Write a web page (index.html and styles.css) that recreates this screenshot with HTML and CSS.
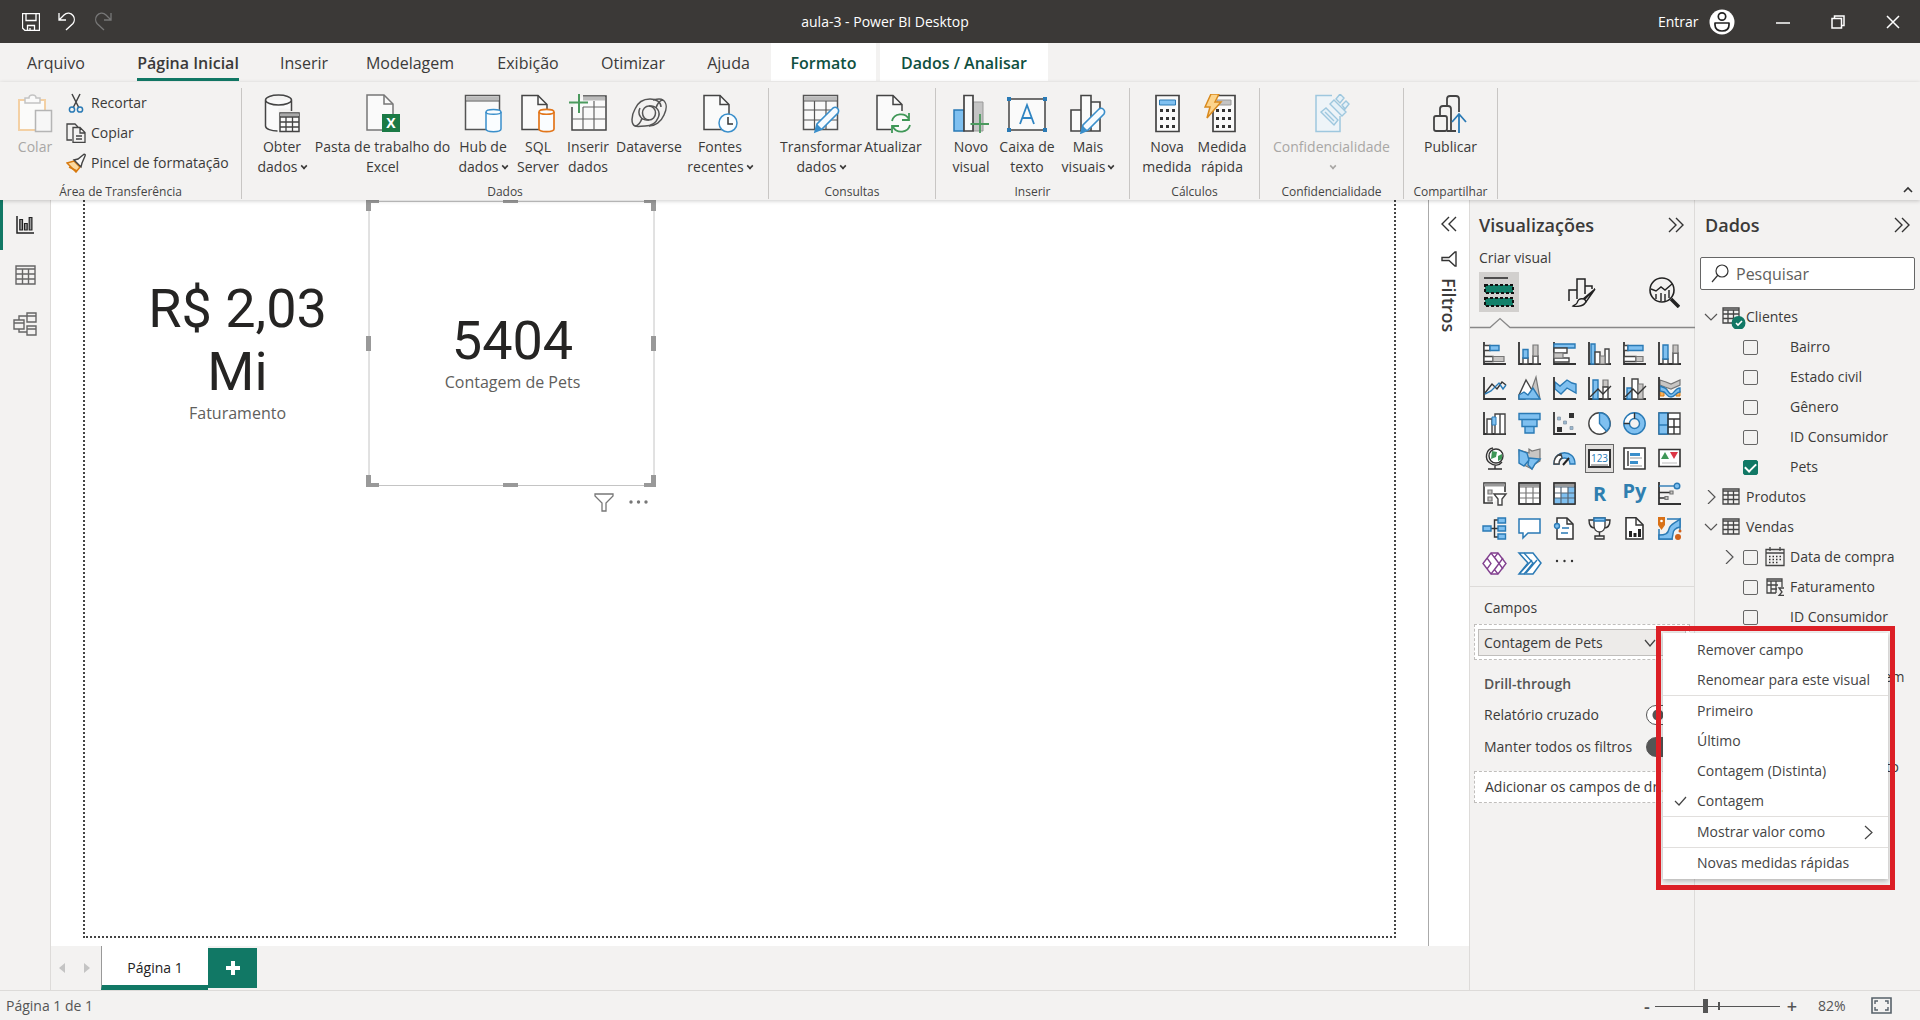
FILE: index.html
```html
<!DOCTYPE html>
<html lang="pt-BR">
<head>
<meta charset="utf-8">
<title>aula-3 - Power BI Desktop</title>
<link rel="stylesheet" href="styles.css">
</head>
<body>
<div class="app">

<header class="titlebar">
  <div class="quick">
    <button class="tb" aria-label="Salvar"><svg width="18" height="18" viewBox="0 0 18 18"><path d="M.5.5h17v17H3L.5 15zM4 .5v7h10v-7M5.500 17.500v-5h7v5M8 15v2.500"/></svg></button>
    <button class="tb" aria-label="Desfazer"><svg width="18" height="19" viewBox="0 0 18 19"><path d="M1 1v7h7M1.500 7.500 6 3c3-3 7-2 9 .5s1.500 6 0 8L8 18"/></svg></button>
    <button class="tb dim" aria-label="Refazer"><svg width="18" height="19" viewBox="0 0 18 19"><path d="M17 1v7h-7M16.500 7.500 12 3C9 0 5 1 3 3.500s-1.500 6 0 8L10 18"/></svg></button>
  </div>
  <div class="apptitle">aula-3 - Power BI Desktop</div>
  <div class="wincontrols">
    <button class="signin">Entrar
      <svg width="26" height="26" viewBox="0 0 26 26"><circle cx="13" cy="13" r="12.500" fill="#fff"/><circle cx="13" cy="7.500" r="3.700" fill="none" stroke="#222" stroke-width="1.700"/><path d="M6 14h14v2c0 4-3 6-7 6s-7-2-7-6z" fill="none" stroke="#222" stroke-width="1.700" stroke-linejoin="round"/></svg>
    </button>
    <button class="tb" aria-label="Minimizar"><svg width="14" height="14" viewBox="0 0 14 14"><path d="M0 8h14" stroke-width="1.500"/></svg></button>
    <button class="tb" aria-label="Restaurar"><svg width="14" height="14" viewBox="0 0 14 14"><path d="M1 3.500h9.500V13H1zM3.500 3V1h9.500v9.500h-2" stroke-width="1.500"/></svg></button>
    <button class="tb" aria-label="Fechar"><svg width="14" height="14" viewBox="0 0 14 14"><path d="M1 1l12 12M13 1 1 13" stroke-width="1.500"/></svg></button>
  </div>
</header>

<nav class="tabs">
  <button>Arquivo</button><button class="on">Página Inicial</button><button>Inserir</button><button>Modelagem</button><button>Exibição</button><button>Otimizar</button><button>Ajuda</button><button class="ctx">Formato</button><button class="ctx">Dados / Analisar</button>
</nav>

<section class="ribbon">
  <div class="group g-clip">
    <div class="tools">
      <button class="rb off"><svg width="36" height="40" viewBox="0 0 36 40"><path d="M2 6h26v30H2z" fill="#fbfbfa" stroke="#f3d0a4" stroke-width="2"/><path d="M8 9V4h4c0-4 7-4 7 0h4v5z" fill="#fafafa" stroke="#c4c4c4" stroke-width="1.500"/><path d="M18.500 16.500h16v21h-16z" fill="#f7f7f7" stroke="#b5b5b5" stroke-width="1.500"/></svg>Colar</button>
      <div class="stack">
        <button><svg width="20" height="20" viewBox="0 0 20 20"><path d="M6 1l7 14M14 1 7 15" fill="none" stroke="#444" stroke-width="1.500"/><circle cx="6" cy="16.500" r="2.600" fill="none" stroke="#2a7ab5" stroke-width="1.500"/><circle cx="14" cy="16.500" r="2.600" fill="none" stroke="#2a7ab5" stroke-width="1.500"/></svg>Recortar</button>
        <button><svg width="20" height="20" viewBox="0 0 20 20"><path d="M6 17H1V1h8l3 3M7 4.500h7l5 5V19.500H7zM14 5v5h5M10 13h6M10 16h6" fill="none" stroke="#444" stroke-width="1.300"/></svg>Copiar</button>
        <button><svg width="20" height="20" viewBox="0 0 20 20"><path d="M1 10l7-2 6 6-4 5z" fill="#fbd9a0" stroke="#d77a10" stroke-width="1.500"/><path d="M3 14l8 4" stroke="#d77a10" stroke-width="1.500"/><path d="M8 7l7 7 1-4 3-7c1-2-1-2-2-1l-5 4z" fill="#fafafa" stroke="#444" stroke-width="1.400"/></svg>Pincel de formatação</button>
      </div>
    </div>
    <h2>Área de Transferência</h2>
  </div>

  <div class="group g-data">
    <div class="tools">
      <button class="rb"><svg width="36" height="40" viewBox="0 0 36 40"><path d="M1.500 6v26c0 3 6 5 13 5V14l13 1V6" fill="#fafafa"/><path d="M27.500 17V6c0-2.800-6-5-13-5s-13 2.200-13 5v26c0 3 6 5 12 5M1.500 6c0 2.800 6 5 13 5s13-2.200 13-5" fill="none" stroke="#444" stroke-width="1.500"/><path d="M16 19h19v18.500H16z" fill="#fafafa" stroke="#444" stroke-width="1.500"/><path d="M16 21h19" stroke="#aaa" stroke-width="3"/><path d="M16 23h19M16 28h19M16 33h19M22 23v15M28.500 23v15" stroke="#444" stroke-width="1.300"/></svg>Obter<br>dados<i></i></button>
      <button class="rb"><svg width="36" height="40" viewBox="0 0 36 40"><path d="M2 1h17l9 9v26H2z" fill="#fafafa" stroke="#777" stroke-width="1.500"/><path d="M19 1v9h9" fill="none" stroke="#777" stroke-width="1.500"/><rect x="17" y="20" width="18" height="18" fill="#1b7a45"/><text x="26" y="34" text-anchor="middle" class="glyph" font-size="14" fill="#fff">X</text></svg>Pasta de trabalho do<br>Excel</button>
      <button class="rb"><svg width="38" height="40" viewBox="0 0 38 40"><path d="M1.500 1.500h34v34h-34z" fill="#fafafa" stroke="#555" stroke-width="1.500"/><path d="M2 4.500h33" stroke="#bbb" stroke-width="4"/><path d="M2 7h33" stroke="#555"/><path d="M22 18v17c0 3.500 15 3.500 15 0V18c0-3.500-15-3.500-15 0z" fill="#fafdff" stroke="#3a8fcb" stroke-width="1.500"/><path d="M22 18c0 3 15 3 15 0" fill="none" stroke="#3a8fcb" stroke-width="1.500"/></svg>Hub de<br>dados<i></i></button>
      <button class="rb"><svg width="36" height="40" viewBox="0 0 36 40"><path d="M2 1.500h16l9 9v25H2z" fill="#fafafa" stroke="#444" stroke-width="1.500"/><path d="M18 1.500v9h9" fill="none" stroke="#444" stroke-width="1.500"/><path d="M19 18v17c0 3.500 15 3.500 15 0V18c0-3.500-15-3.500-15 0z" fill="#fafdff" stroke="#e2761b" stroke-width="1.700"/><path d="M19 18c0 3 15 3 15 0" fill="none" stroke="#e2761b" stroke-width="1.700"/></svg>SQL<br>Server</button>
      <button class="rb"><svg width="38" height="40" viewBox="0 0 38 40"><path d="M3 13v23h34V2H14" fill="#fafafa" stroke="#444" stroke-width="1.500"/><path d="M14 4.500h22" stroke="#bbb" stroke-width="4"/><path d="M14 13v23M25 7v29M14 13h23M3 25h34" stroke="#666" stroke-width="1.200"/><path d="M10 0v19M0 8.500h19" stroke="#4b9a5e" stroke-width="2"/></svg>Inserir<br>dados</button>
      <button class="rb"><svg width="38" height="40" viewBox="0 0 38 40"><g fill="none" stroke="#555" stroke-width="1.500"><ellipse cx="19" cy="19" rx="6.500" ry="7"/><path d="M19 12c8-1 12 6 9 12-2 5-7 8-13 8-4 0-7 1-10 0C1 30 1 22 5 15 8 8 14 5 20 5c6 0 11 3 11 8"/><path d="M19 26c-8 1-12-6-9-12M23 6c4-1 7-2 10 0 4 3 4 9 1 15-3 7-9 11-15 11M12 24c-1 4-4 8-7 8M26 14c1-4 4-8 7-8"/></g></svg>Dataverse</button>
      <button class="rb"><svg width="36" height="40" viewBox="0 0 36 40"><path d="M2 1.500h16l9 9v25H2z" fill="#fafafa" stroke="#444" stroke-width="1.500"/><path d="M18 1.500v9h9" fill="none" stroke="#444" stroke-width="1.500"/><circle cx="26" cy="29" r="9" fill="#fafdff" stroke="#3a8fcb" stroke-width="1.500"/><path d="M26 23v7h5" fill="none" stroke="#333" stroke-width="1.500"/></svg>Fontes<br>recentes<i></i></button>
    </div>
    <h2>Dados</h2>
  </div>

  <div class="group g-query">
    <div class="tools">
      <button class="rb"><svg width="38" height="40" viewBox="0 0 38 40"><path d="M1.500 1.500h34v34h-34z" fill="#fafafa" stroke="#555" stroke-width="1.500"/><path d="M2 4.500h33" stroke="#bbb" stroke-width="4"/><path d="M2 7h33M2 16h33M2 26h33M12.500 7v29M24 7v29" stroke="#555" stroke-width="1.200"/><path d="M13 38l2-8 16-16c3-2 7 1 5 5L20 35z" fill="#f6fbff" stroke="#3a8fcb" stroke-width="1.600"/><path d="M13 38l2-8 5 5z" fill="#3a8fcb"/></svg>Transformar<br>dados<i></i></button>
      <button class="rb"><svg width="36" height="40" viewBox="0 0 36 40"><path d="M2 1.500h16l9 9v25H2z" fill="#fafafa"/><path d="M16 35.500H2v-34h16l9 9V17M18 1.500v9h9" fill="none" stroke="#444" stroke-width="1.500"/><circle cx="25.500" cy="29" r="10" fill="#fafafa"/><path d="M17 27c2-8 13-9 17-2M34 19v7h-7M35 31c-2 8-13 9-17 2M17 39v-7h7" fill="none" stroke="#3f9757" stroke-width="1.800"/></svg>Atualizar</button>
    </div>
    <h2>Consultas</h2>
  </div>

  <div class="group g-insert">
    <div class="tools">
      <button class="rb"><svg width="38" height="40" viewBox="0 0 38 40"><path d="M2 16h10v21H2z" fill="#7fc0f0" stroke="#2a7ab5" stroke-width="1.500"/><path d="M21 8h10v29H21z" fill="#c4c4c4" stroke="#999"/><path d="M12 1.500h9V37h-9z" fill="#fafafa" stroke="#444" stroke-width="1.700"/><path d="M28 20v19M18.500 30H37" stroke="#4b9a5e" stroke-width="1.800"/></svg>Novo<br>visual</button>
      <button class="rb"><svg width="40" height="40" viewBox="0 0 40 40"><path d="M2 5h36v31H2z" fill="#fafafa" stroke="#444" stroke-width="1.500"/><path d="M0 3h4v4H0zM36 3h4v4h-4zM0 34h4v4H0zM36 34h4v4h-4z" fill="#2a7ab5"/><path d="M13 30l7-19 7 19M15.500 24h9" fill="none" stroke="#2f84c2" stroke-width="1.800"/></svg>Caixa de<br>texto</button>
      <button class="rb"><svg width="38" height="40" viewBox="0 0 38 40"><path d="M2 16h10v21H2zM12 1.500h10V37H12zM22 8h9v29h-9z" fill="#fafafa" stroke="#444" stroke-width="1.600"/><path d="M12 39l2-8 16-16c3-2 7 1 5 5L19 36z" fill="#f6fbff" stroke="#3a8fcb" stroke-width="1.600"/><path d="M12 39l2-7 4 4z" fill="#3a8fcb"/></svg>Mais<br>visuais<i></i></button>
    </div>
    <h2>Inserir</h2>
  </div>

  <div class="group g-calc">
    <div class="tools">
      <button class="rb"><svg width="36" height="40" viewBox="0 0 36 40"><path d="M7 1.500h23v36H7z" fill="#fafafa" stroke="#444" stroke-width="1.700"/><path d="M10.500 6h16v5h-16z" fill="#7fc0f0" stroke="#2a7ab5"/><path d="M11 15h3v3h-3zM17 15h3v3h-3zM23 15h3v3h-3zM11 23h3v3h-3zM17 23h3v3h-3zM23 23h3v3h-3zM11 31h3v3h-3zM17 31h3v3h-3zM23 31h3v3h-3z" fill="#333"/></svg>Nova<br>medida</button>
      <button class="rb"><svg width="36" height="40" viewBox="0 0 36 40"><path d="M9 1.500h22v36H9z" fill="#fafafa" stroke="#444" stroke-width="1.700"/><path d="M13 6h14v5H13z" fill="#c4c4c4" stroke="#999"/><path d="M12 15h3v3h-3zM18 15h3v3h-3zM24 15h3v3h-3zM12 23h3v3h-3zM18 23h3v3h-3zM24 23h3v3h-3zM12 31h3v3h-3zM18 31h3v3h-3zM24 31h3v3h-3z" fill="#333"/><path d="M7 0h8l-4 8h6L3 24l3-11H1z" fill="#fcd48c" stroke="#d98a1e" stroke-width="1.500"/></svg>Medida<br>rápida</button>
    </div>
    <h2>Cálculos</h2>
  </div>

  <div class="group g-conf">
    <div class="tools">
      <button class="rb off"><svg width="38" height="40" viewBox="0 0 38 40"><path d="M20 1.500H4v36h24V22" fill="#eef4f8" stroke="#9ec7de" stroke-width="1.500"/><g fill="#e6f1f8" stroke="#9ec7de" stroke-width="1.400"><path d="M9 18l5-4 12 12-4 5zM13 18l9 9"/><path d="M18 10l4-4 12 12-4 4zM24 5l4-5 4 4-4 5zM30 11l4-4 3 3-4 5z"/></g></svg>Confidencialidade<br><i></i></button>
    </div>
    <h2>Confidencialidade</h2>
  </div>

  <div class="group g-share">
    <div class="tools">
      <button class="rb"><svg width="36" height="40" viewBox="0 0 36 40"><path d="M15 12V5q0-3 3-3h6q3 0 3 3v13M8 22v-7q0-3 3-3h5q3 0 3 3v22M4 22h9q2 0 2 2v11q0 2-2 2H4q-2 0-2-2V24q0-2 2-2zM15 37h9" fill="none" stroke="#444" stroke-width="1.800"/><path d="M27 39V21M20 28l7-8 7 8" fill="none" stroke="#2a7ab5" stroke-width="1.800"/></svg>Publicar</button>
    </div>
    <h2>Compartilhar</h2>
  </div>
  <button class="collapse" aria-label="Recolher faixa"><svg width="10" height="7" viewBox="0 0 10 7"><path d="M1 6l4-4 4 4" fill="none" stroke="#333" stroke-width="1.600"/></svg></button>
</section>

<main class="body">
  <aside class="rail">
    <button class="on" aria-label="Relatório"><svg width="18" height="18" viewBox="0 0 18 18"><path d="M1 0v17h17" fill="none" stroke="#222" stroke-width="1.500"/><path d="M3.800 3.500h2.700V14H3.800zM8.500 7.500h2.700V14H8.500zM13.200 1.500h2.700V14h-2.700z" fill="#999" stroke="#222" stroke-width="1.200"/></svg></button>
    <button aria-label="Dados"><svg width="21" height="20" viewBox="0 0 21 20"><path d="M1 1h19v18H1zM1 4h19M1 9h19M1 14h19M7.500 4v15M13.500 4v15" fill="none" stroke="#666" stroke-width="1.400"/></svg></button>
    <button aria-label="Modelo"><svg width="24" height="24" viewBox="0 0 24 24"><path d="M1 8h10v9H1zM14 1h9v9h-9zM14 14h9v9h-9zM1 11h10M14 4h9M14 17h9M6 8V4h8M6 17v3h8" fill="none" stroke="#666" stroke-width="1.400"/></svg></button>
  </aside>

  <div class="center">
    <div class="work">
      <div class="canvas">
        <div class="page">
          <article class="card c1"><strong>R$ 2,03 Mi</strong><span>Faturamento</span></article>
          <article class="card c2"><strong>5404</strong><span>Contagem de Pets</span>
            <svg class="handles" width="291" height="289" viewBox="0 0 291 289"><path d="M3 2.500h285v284H3z" fill="none" stroke="#c4c4c4"/><path d="M0 0h13v4H5v8H0zM137 0h15v4h-15zM278 0h12v12h-5V4h-7zM0 137h5v15H0zM285 137h5v15h-5zM0 276h5v8h8v4H0zM137 284h15v4h-15zM285 276h5v12h-12v-4h7z" fill="#999"/></svg>
            <div class="cardtools"><svg width="20" height="19" viewBox="0 0 20 19"><path d="M1 1h18v2l-7 7v8H8v-8L1 3z" fill="none" stroke="#777" stroke-width="1.300"/></svg><svg width="20" height="19" viewBox="0 0 20 19"><circle cx="2" cy="9" r="1.700" fill="#777"/><circle cx="9.500" cy="9" r="1.700" fill="#777"/><circle cx="17" cy="9" r="1.700" fill="#777"/></svg></div>
          </article>
        </div>
      </div>
      <aside class="filters">
        <button aria-label="Expandir"><svg width="16" height="16" viewBox="0 0 16 16"><path d="M8 1 1 8l7 7M15 1 8 8l7 7" fill="none" stroke="#333" stroke-width="1.400"/></svg></button>
        <svg width="16" height="16" viewBox="0 0 16 16"><path d="M15 1v14h-1L8 9.500H1v-3h7L14 1z" fill="none" stroke="#333" stroke-width="1.400"/></svg>
        <h2>Filtros</h2>
      </aside>
    </div>
    <div class="pages">
      <button class="arrow" aria-label="Anterior"><svg width="6" height="10" viewBox="0 0 6 10"><path d="M6 0v10L0 5z" fill="#c4c4c4"/></svg></button>
      <button class="arrow" aria-label="Próxima"><svg width="6" height="10" viewBox="0 0 6 10"><path d="M0 0v10l6-5z" fill="#c4c4c4"/></svg></button>
      <button class="pagetab">Página 1</button>
      <button class="add" aria-label="Nova página"><svg width="14" height="14" viewBox="0 0 14 14"><path d="M7 0v14M0 7h14" stroke="#fff" stroke-width="4"/></svg></button>
    </div>
  </div>

  <aside class="viz">
    <div class="head"><h2>Visualizações</h2><button aria-label="Recolher"><svg width="16" height="16" viewBox="0 0 16 16"><path d="M1 1l7 7-7 7M8 1l7 7-7 7" fill="none" stroke="#333" stroke-width="1.400"/></svg></button></div>
    <h3>Criar visual</h3>
    <div class="modes">
      <button class="on" aria-label="Compilar visual"><svg width="30" height="31" viewBox="0 0 30 31"><path d="M0 1h24" stroke="#222" stroke-width="1.500"/><path d="M1 8h28v8H1zM1 21h28v8H1z" fill="#12806a" stroke="#111" stroke-width="2" stroke-dasharray="3 2"/></svg></button>
      <button aria-label="Formatar visual"><svg width="28" height="30" viewBox="0 0 28 30"><path d="M1 24V13h8M9 22V2h8v15M17 9h7v3" fill="none" stroke="#222" stroke-width="1.500"/><path d="M27 12 16 23M27 12l-9 13-3-3z" fill="#f3f2f1" stroke="#222" stroke-width="1.400"/><path d="M16 22c-5-1-6 1-7 4-1 2-3 2-4 3 5 1 12 0 13-5z" fill="#f3f2f1" stroke="#222" stroke-width="1.400"/></svg></button>
      <button aria-label="Análise"><svg width="31" height="31" viewBox="0 0 31 31"><circle cx="13" cy="13" r="12" fill="none" stroke="#222" stroke-width="1.600"/><path d="M2 12l5 2 5-4 4 3 7-6M7 17v5M12 16v8M16 17v7M20 13v8" fill="none" stroke="#222" stroke-width="1.400"/><path d="M22 22l8 8" stroke="#222" stroke-width="3.500"/></svg></button>
    </div>
    <svg class="notch" viewBox="0 0 225 12" width="225" height="12"><path d="M0 10.500h20l10-9 10 9h185" fill="none" stroke="#888" stroke-width="1.300"/></svg>
    <div class="gallery">
      <button><svg viewBox="0 0 23 23"><path d="M1 0v22h22" class="k"/><path d="M1 3.500h6v5H1zM1 14.500h9v5H1z" class="w"/><path d="M7 3.500h9v5H7z" class="b"/><path d="M10 14.500h11v5H10z" class="g"/></svg></button>
      <button><svg viewBox="0 0 23 23"><path d="M1 0v22h22" class="k"/><path d="M5 16h5v6H5zM15 14h5v8h-5z" class="w"/><path d="M5 7.500h5V16H5z" class="b"/><path d="M15 3h5v11h-5z" class="g"/></svg></button>
      <button><svg viewBox="0 0 23 23"><path d="M1 0v22h22" class="k"/><path d="M1 2h21v4H1z" class="b"/><path d="M1 6h13v5H1zM1 16h15v4H1z" class="w"/><path d="M1 11h9v5H1z" class="g"/></svg></button>
      <button><svg viewBox="0 0 23 23"><path d="M1 0v22h22" class="k"/><path d="M3 2h4v20H3z" class="b"/><path d="M7 10h5v12H7zM17 7h4v15h-4z" class="w"/><path d="M12 14h5v8h-5z" class="g"/></svg></button>
      <button><svg viewBox="0 0 23 23"><path d="M1 0v22h22" class="k"/><path d="M1 3.500h4v5H1zM1 14.500h12v5H1z" class="w"/><path d="M5 3.500h15v5H5z" class="b"/><path d="M13 14.500h7v5h-7z" class="g"/></svg></button>
      <button><svg viewBox="0 0 23 23"><path d="M1 0v22h22" class="k"/><path d="M5 17h5v5H5zM15 11h5v11h-5z" class="w"/><path d="M5 3h5v14H5z" class="b"/><path d="M15 3h5v8h-5z" class="g"/></svg></button>

      <button><svg viewBox="0 0 23 23"><path d="M1 0v22h22" class="k"/><path d="M2 16l7-9 5 5 5-7 4 3" class="k1"/><path d="M2 17l6-3 8-8 4 6 3-4" class="bl"/></svg></button>
      <button><svg viewBox="0 0 23 23"><path d="M13 14l5-14 4 22h-9z" class="g"/><path d="M1 18 8 3l7 12-8 7H1z" class="w"/><path d="M1 18l5-3 4 3 5-7 7 11H1z" class="b"/></svg></button>
      <button><svg viewBox="0 0 23 23"><path d="M2 5l5 4 7-6 5 3 4 1v9l-9-5-6 6-6-5z" class="b"/><path d="M1 0v22h22" class="k"/></svg></button>
      <button><svg viewBox="0 0 23 23"><path d="M1 0v22h22" class="k"/><path d="M5 3h5v19H5z" class="b"/><path d="M15 3h5v7h-5z" class="g"/><path d="M15 10h5v12h-5z" class="w"/><path d="M2 20l8-8 5 5 8-8" class="k1"/></svg></button>
      <button><svg viewBox="0 0 23 23"><path d="M1 0v22h22" class="k"/><path d="M4 11h5v11H4z" class="b"/><path d="M9 2h6v20H9z" class="w"/><path d="M15 7h5v15h-5z" class="g"/><path d="M2 20l8-8 5 5 8-8" class="k1"/></svg></button>
      <button><svg viewBox="0 0 23 23"><path d="M2 12h4v7H2zM18 14h4v5h-4z" fill="#f7b15c" stroke="#d77a10"/><path d="M2 3l6 2 5 2 9-4v5l-9 4-6-2-5-2z" class="g"/><path d="M2 9l5 2c3 1 3 6 6 6s4-6 9-6v4c-4 0-5 5-9 5s-5-4-7-5l-4-1z" class="b"/><path d="M1 0v22h22" class="k"/></svg></button>

      <button><svg viewBox="0 0 23 23"><path d="M1 0v22h22" class="k"/><path d="M4 7h5v15H4zM12 2h5v20h-5zM17 2h5v20h-5z" class="w"/><path d="M9 5h4v8H9z" fill="#7fc0f0" stroke="#2a7ab5"/></svg></button>
      <button><svg viewBox="0 0 23 23"><path d="M1 1.500h21v6H1zM4 7.500h15v7H4zM7 14.500h9V21H7z" class="b"/></svg></button>
      <button><svg viewBox="0 0 23 23"><path d="M1 0v22h22" class="k"/><path d="M16 1h5v5h-5zM4 15h5v5H4z" fill="#333"/><path d="M4.500 5h3v3h-3zM10.500 9h3v3h-3zM17 14.500h3v3h-3z" fill="#9ab8cf" stroke="#89a" stroke-width=".8"/></svg></button>
      <button><svg viewBox="0 0 23 23"><circle cx="11.500" cy="11.500" r="10.700" class="w"/><path d="M11.500.8a10.700 10.700 0 0 1 7 18.500l-7-7.800z" class="b"/></svg></button>
      <button><svg viewBox="0 0 23 23"><circle cx="11.500" cy="11.500" r="8" fill="none" stroke="#7fc0f0" stroke-width="6"/><path d="M3.500 11.500a8 8 0 0 1 8-8" fill="none" stroke="#fff" stroke-width="5"/><circle cx="11.500" cy="11.500" r="10.700" class="bl"/><circle cx="11.500" cy="11.500" r="5" class="bl"/><path d="M.8 11.500h6M11.500.8v6" class="k1"/></svg></button>
      <button><svg viewBox="0 0 23 23"><path d="M1 1h21v21H1z" class="w"/><path d="M1 1h9v12H1zM1 13h9v9H1z" class="b"/><path d="M10 1v21M10 7h12M16 7v8M10 15h12M16 15v7" class="k1"/></svg></button>

      <button><svg viewBox="0 0 23 23"><circle cx="13" cy="9" r="7" fill="#fff" stroke="#333" stroke-width="1.400"/><path d="M9 4l5 1-1 5-5 2zM15 9l4-2v5l-4 2z" fill="#3f9757"/><path d="M10 1C3 2 1 12 7 16c4 3 9 3 12-1M12 18v4M5 22h14" class="k1"/></svg></button>
      <button><svg viewBox="0 0 23 23"><path d="M1 3l10 3V2l3 2 8-2v12l-5 3-3 5-6-3-6-3z" class="g"/><path d="M1 3l8 3 2 7-5 6-5-3zM11 11l11 1-5 5-3 5-4-4z" class="b"/></svg></button>
      <button><svg viewBox="0 0 23 23"><path d="M1 17C1 2 22 2 22 17h-5c0-8-11-8-11 0z" class="b"/><path d="M1 17c0-6 3-9 7-10l1 4c-2 1-3 3-3 6z" class="w"/><path d="M10 18l6-7" stroke="#222" stroke-width="2"/></svg></button>
      <button class="on"><svg viewBox="0 0 23 23"><path d="M1 3h21v17H1z" fill="#fff" stroke="#333" stroke-width="2"/><path d="M3 18h17" stroke="#999" stroke-width="1.500"/><text x="11.500" y="15" text-anchor="middle" class="num" font-size="10">123</text></svg></button>
      <button><svg viewBox="0 0 23 23"><path d="M1 1h21v21H1z" fill="#fff" stroke="#333" stroke-width="1.600"/><path d="M5 4v15" class="k1"/><path d="M7 6h10v3H7zM7 14h8v3H7z" fill="#3a8fcb"/><path d="M7 11h12M7 19h12" stroke="#999"/></svg></button>
      <button><svg viewBox="0 0 23 23"><path d="M1 2.500h21v17H1z" fill="#fff" stroke="#333" stroke-width="1.600"/><path d="M3 12l4-7 4 7z" fill="#3f9757"/><path d="M12 5h8l-4 7z" fill="#dc3545"/><path d="M4 16h15" stroke="#bbb"/></svg></button>

      <button><svg viewBox="0 0 23 23"><path d="M10 21H1V1h21v9" fill="#fff" stroke="#333" stroke-width="1.600"/><path d="M1 3h21" stroke="#999" stroke-width="3"/><path d="M5 8h4v4H5zM5 15h4v4H5z" class="g"/><path d="M11 12h12l-4 5v6h-4v-6z" class="w"/></svg></button>
      <button><svg viewBox="0 0 23 23"><path d="M1 1h21v21H1z" class="w"/><path d="M1 3h21" stroke="#999" stroke-width="3"/><path d="M1 5h21M1 11h21M1 16h21M8 5v17M15 5v17" stroke="#777" stroke-width="1.200"/><path d="M1 1h21v21H1z" class="k1"/></svg></button>
      <button><svg viewBox="0 0 23 23"><path d="M1 1h21v21H1z" class="w"/><path d="M15 5h7v17H1v-6h7v-5h7z" fill="#7fc0f0"/><path d="M1 3h21" stroke="#999" stroke-width="3"/><path d="M1 5h21M1 11h21M1 16h21M8 5v17M15 5v17" stroke="#567" stroke-width="1.200"/><path d="M1 1h21v21H1z" class="k1"/></svg></button>
      <button><svg viewBox="0 0 23 23"><text x="11.500" y="19" text-anchor="middle" class="letter" font-size="20">R</text></svg></button>
      <button><svg viewBox="0 0 23 23"><text x="11.500" y="16" text-anchor="middle" class="letter" font-size="20">Py</text></svg></button>
      <button><svg viewBox="0 0 23 23"><path d="M1 0v22h22" class="k"/><path d="M1 4h15" class="bl"/><circle cx="19" cy="4" r="2.800" class="b"/><path d="M1 10.500h11M1 16h6" class="k1"/><path d="M12 9h3v3h-3zM7 14.500h3v3H7z" class="g"/></svg></button>

      <button><svg viewBox="0 0 23 23"><path d="M8 11.500h7M15 3h-3.500v17H15" class="k1"/><path d="M0 9h8v5H0zM15 1h7.500v5H15zM15 9h7.500v5H15zM15 17h7.500v5H15z" class="b"/></svg></button>
      <button><svg viewBox="0 0 23 23"><path d="M1 2h21v14H10l-5 5v-5H1z" fill="#fff" stroke="#2a7ab5" stroke-width="1.500"/></svg></button>
      <button><svg viewBox="0 0 23 23"><path d="M4 6V1h10l6 6v15H4V12" fill="#fff" stroke="#333" stroke-width="1.500"/><path d="M14 1v6h6" class="k1"/><circle cx="4" cy="9" r="2.500" class="b"/><path d="M9 11h7M8 16h7" class="bl"/></svg></button>
      <button><svg viewBox="0 0 23 23"><path d="M6 3H1c0 6 2 8 6 8M17 3h5c0 6-2 8-6 8" class="k1"/><path d="M6 1h11v8c0 3-2 6-5.500 6S6 12 6 9z" class="w"/><path d="M6 1h11v3H6z" class="b"/><path d="M11.500 15v4M7 19h9v3H7z" class="k1"/></svg></button>
      <button><svg viewBox="0 0 23 23"><path d="M3 .8h10l7 7V22H3z" fill="#fff" stroke="#333" stroke-width="1.600"/><path d="M13 1v7h7" class="k1"/><path d="M6 14h3v6H6zM10.500 16h3v4h-3zM15 12h3v8h-3z" fill="#222"/></svg></button>
      <button><svg viewBox="0 0 23 23"><path d="M9 2h13v11M1 12v10h14" fill="none" stroke="#2a7ab5" stroke-width="1.500"/><path d="M1 22v-4c6 0 9-1 10-6s5-5 11-10v8c-5 1-7 3-7 7l-1 5z" class="b"/><path d="M0 0h7v8l-3.500 5L0 8z" fill="#d97117"/><circle cx="3.500" cy="4" r="1.300" fill="#fff"/><circle cx="20" cy="20" r="3" fill="#d0611a"/><circle cx="22" cy="14" r="1.500" fill="#d0611a"/></svg></button>

      <button><svg viewBox="0 0 23 23"><path d="M8 1h7l8 10.500L15 22H8L0 11.500z" fill="#fff" stroke="#82408f" stroke-width="1.400"/><path d="M8 1l8 10.500L8 22M15 1l-4 5M15 22l-4-5M4 6l4 5.500L4 17M12 17l8-11M12 6l8 11" fill="none" stroke="#82408f" stroke-width="1.300"/></svg></button>
      <button><svg viewBox="0 0 23 23"><path d="M1 1h14l8 10-8 11H1l9-11z" fill="#fff" stroke="#2a7ab5" stroke-width="1.500"/><path d="M6 1l9 10-9 11M2 21 14 8M8 21 19 8" fill="none" stroke="#2a7ab5" stroke-width="1.400"/></svg></button>
      <button><svg viewBox="0 0 23 23"><circle cx="4" cy="9" r="1.200" fill="#333"/><circle cx="11.500" cy="9" r="1.200" fill="#333"/><circle cx="19" cy="9" r="1.200" fill="#333"/></svg></button>
    </div>
    <div class="wells">
      <h3>Campos</h3>
      <div class="drop"><button class="chip">Contagem de Pets<svg width="12" height="8" viewBox="0 0 12 8"><path d="M1 1l5 6 5-6" fill="none" stroke="#444" stroke-width="1.300"/></svg></button></div>
      <h3 class="bold">Drill-through</h3>
      <label class="toggle">Relatório cruzado<input type="checkbox"></label>
      <label class="toggle">Manter todos os filtros<input type="checkbox" checked></label>
      <div class="drop add-field">Adicionar os campos de dr...</div>
    </div>
    <div class="menu">
      <button>Remover campo</button>
      <button>Renomear para este visual</button>
      <hr>
      <button>Primeiro</button>
      <button>Último</button>
      <button>Contagem (Distinta)</button>
      <button><svg width="13" height="10" viewBox="0 0 13 10"><path d="M1 5l4 4 7-8" fill="none" stroke="#444" stroke-width="1.200"/></svg>Contagem</button>
      <hr>
      <button>Mostrar valor como<svg class="sub" width="9" height="15" viewBox="0 0 9 15"><path d="M1 1l7 6.500L1 14" fill="none" stroke="#444" stroke-width="1.200"/></svg></button>
      <hr>
      <button>Novas medidas rápidas</button>
    </div>
  </aside>

  <aside class="fields">
    <div class="head"><h2>Dados</h2><button aria-label="Recolher"><svg width="16" height="16" viewBox="0 0 16 16"><path d="M1 1l7 7-7 7M8 1l7 7-7 7" fill="none" stroke="#333" stroke-width="1.400"/></svg></button></div>
    <label class="search"><svg width="18" height="19" viewBox="0 0 18 19"><circle cx="11" cy="7" r="6" fill="none" stroke="#333" stroke-width="1.200"/><path d="M7 11l-6 7" stroke="#333" stroke-width="1.200"/></svg><input type="text" placeholder="Pesquisar" aria-label="Pesquisar"></label>
    <div class="tree">
      <button class="tbl"><svg width="14" height="8" viewBox="0 0 14 8"><path d="M1 1l6 6 6-6" class="ch"/></svg><svg width="24" height="24" viewBox="0 0 24 24"><path d="M1 3h16v15H1zM1 5h16M1 9h16M1 13.500h16M6 5v13M11.500 5v13" class="ti"/><circle cx="16.500" cy="18" r="7" fill="#117865"/><path d="M14 18l2 2 4-4" fill="none" stroke="#fff" stroke-width="1.600"/></svg>Clientes</button>
      <label><input type="checkbox"><span></span>Bairro</label>
      <label><input type="checkbox"><span></span>Estado civil</label>
      <label><input type="checkbox"><span></span>Gênero</label>
      <label><input type="checkbox"><span></span>ID Consumidor</label>
      <label><input type="checkbox" checked><span></span>Pets</label>
      <button class="tbl"><svg width="14" height="14" viewBox="0 0 14 14"><path d="M4 0l7 7-7 7" class="ch"/></svg><svg width="24" height="18" viewBox="0 0 24 18"><path d="M1 1h16v15H1zM1 3h16M1 7h16M1 11.500h16M6 3v13M11.500 3v13" class="ti"/></svg>Produtos</button>
      <button class="tbl"><svg width="14" height="8" viewBox="0 0 14 8"><path d="M1 1l6 6 6-6" class="ch"/></svg><svg width="24" height="18" viewBox="0 0 24 18"><path d="M1 1h16v15H1zM1 3h16M1 7h16M1 11.500h16M6 3v13M11.500 3v13" class="ti"/></svg>Vendas</button>
      <label class="exp"><svg width="18" height="14" viewBox="0 0 18 14"><path d="M1 0l7 7-7 7" class="ch"/></svg><input type="checkbox"><span><svg width="20" height="20" viewBox="0 0 20 20"><path d="M1 2.500h18v16H1zM1 6h18M5 0v4M15 0v4" class="ti"/><path d="M4 9.500h13M4 12.500h13M4 15.500h10" stroke="#333" stroke-width="1.500" stroke-dasharray="1.500 2"/></svg></span>Data de compra</label>
      <label><input type="checkbox"><span><svg width="20" height="18" viewBox="0 0 20 18"><path d="M11 15H2V1h15v8M2 3h15M2 7h11M6 3v12M11 3v12M6 11h6" class="ti"/><path d="M19 10h-5l3 4-3 3.500h5" class="ti"/></svg></span>Faturamento</label>
      <label><input type="checkbox"><span></span>ID Consumidor</label>
      <label><input type="checkbox"><span></span>ID Produto</label>
      <label><input type="checkbox"><span></span>Valor embalagem</label>
      <label><input type="checkbox"><span></span>Loja</label>
      <label><input type="checkbox"><span></span>Quantidade</label>
      <label><input type="checkbox"><span></span>Data pagamento</label>
    </div>
  </aside>
</main>

<footer class="status">
  <span>Página 1 de 1</span>
  <div class="zoom"><button aria-label="Reduzir">-</button><input type="range" min="0" max="100" value="40" aria-label="Zoom"><button aria-label="Ampliar">+</button><output>82%</output>
  <button aria-label="Ajustar à página"><svg width="21" height="17" viewBox="0 0 21 17"><path d="M1 1h19v15H1z" fill="none" stroke="#57616a" stroke-width="1.600"/><path d="M4 7V4h3M14 4h3v3M17 10v3h-3M7 13H4v-3" fill="none" stroke="#57616a" stroke-width="1.400"/></svg></button></div>
</footer>
</div>
</body>
</html>
```
FILE: styles.css
```css
* { box-sizing: border-box; }
body { margin: 0; background: #f3f2f1; color: #3b3a39; font: 14px/20px "Open Sans", "Noto Sans", sans-serif; }
button { font: inherit; color: inherit; background: none; border: 0; padding: 0; margin: 0; }
svg { display: block; flex: none; }
h2, h3 { margin: 0; font-size: inherit; font-weight: 400; }
.app { display: flex; flex-direction: column; min-height: 100vh; }

.titlebar { display: flex; align-items: center; height: 43px; background: #3b3937; color: #fff; }
.quick { display: flex; gap: 18px; width: 112px; padding-left: 22px; }
.tb svg { fill: none; stroke: #fff; stroke-width: 1.300; }
.tb.dim svg { stroke: #777; }
.apptitle { flex: 1; text-align: center; }
.wincontrols { display: flex; align-items: center; gap: 41px; width: 262px; }
.signin { display: flex; align-items: center; gap: 10px; }

.tabs { display: grid; grid-template-columns: 112px 152px 80px 132px 104px 106px 85px 105px 168px; height: 39px; font-size: 16px; }
.tabs button { padding-top: 1px; white-space: nowrap; }
.tabs .on { justify-self: center; height: 38px; padding-top: 4px; border-bottom: 3px solid #117865; font-weight: 600; }
.tabs .ctx { background: #fff; color: #0f5040; font-weight: 600; margin-bottom: 1px; }
.tabs .ctx + .ctx { margin-left: 4px; margin-right: -4px; }

.ribbon { display: flex; height: 118px; padding: 6px 0 1px; position: relative; z-index: 2; background: #f3f2f1; box-shadow: 0 1px 4px #0003; }
.group { display: flex; flex-direction: column; justify-content: space-between; border-right: 1px solid #c8c6c4; }
.group h2 { font-size: 12px; line-height: 14px; text-align: center; color: #444; white-space: nowrap; }
.tools { display: grid; align-items: start; justify-content: center; grid-auto-flow: column; }
.rb { display: block; text-align: center; white-space: nowrap; padding-top: 6px; }
.rb svg { margin: 0 auto 3px; }
.rb.off { color: #a9a7a5; }
.rb i { display: inline-block; width: 6px; height: 6px; margin: 0 0 3px 3px; border: solid; border-width: 0 2px 2px 0; rotate: 45deg; scale: .8; }
.g-clip { width: 242px; }
.g-clip .tools { grid-template-columns: 62px auto; justify-content: start; padding-left: 4px; }
.stack { display: grid; grid-auto-rows: 30px; }
.stack button { display: flex; align-items: center; gap: 5px; white-space: nowrap; }
.g-data { width: 527px; }
.g-data .tools { grid-template-columns: 64px 137px 64px 46px 54px 68px 74px; justify-content: start; padding-left: 8px; }
.g-query { width: 167px; }
.g-query .tools { grid-template-columns: 84px 60px; justify-content: start; padding-left: 10px; }
.g-insert { width: 194px; }
.g-insert .tools { grid-template-columns: 54px 58px 64px; justify-content: start; padding-left: 8px; }
.g-calc { width: 130px; }
.g-calc .tools { grid-template-columns: 58px 52px; justify-content: start; padding-left: 8px; }
.g-conf { width: 144px; }
.g-share { width: 94px; }
.collapse { margin-left: auto; align-self: flex-end; padding: 0 7px 6px 0; }

.body { flex: 1; display: flex; }
.rail { width: 51px; border-right: 1px solid #dddbd9; }
.rail button { display: flex; align-items: center; justify-content: center; width: 50px; height: 49px; }
.rail .on { border-left: 3px solid #117865; padding-right: 3px; height: 50px; }
.center { flex: 1; display: flex; flex-direction: column; min-width: 0; }
.work { flex: 1; display: flex; background: #fff; }
.canvas { flex: 1; display: flex; padding: 0 32px 8px; }
.page { flex: 1; display: flex; border: 2px dotted #444; border-top: 0; }
.card { display: flex; flex-direction: column; align-items: center; text-align: center; font-size: 16px; color: #605e5c; width: 285px; height: 285px; }
.card strong { font: 400 54px/63px Roboto, sans-serif; color: #252423; }
.c1 { padding: 77px 37px 0 57px; }
.c1 strong { width: 190px; }
.c2 { position: relative; padding-top: 109px; }
.handles { position: absolute; left: -4px; top: -1px; }
.cardtools { position: absolute; right: 6px; top: 293px; display: flex; gap: 15px; }
.filters { width: 41px; border-left: 1px solid #aaa; display: flex; flex-direction: column; align-items: center; gap: 19px; padding-top: 16px; }
.filters h2 { writing-mode: vertical-rl; font-weight: 600; font-size: 18px; line-height: 18px; margin-top: -8px; }
.pages { display: flex; height: 44px; }
.arrow { width: 25px; padding-left: 8px; }
.pagetab { width: 107px; padding-top: 4px; background: #fff; border-left: 1px solid #999; border-bottom: 5px solid #117865; color: #222; }
.add { display: grid; place-items: center; width: 49px; margin: 2px 0; background: #117865; }

.viz { position: relative; width: 226px; border-left: 1px solid #dddbd9; border-right: 1px solid #dddbd9; }
.head { display: flex; justify-content: space-between; align-items: center; height: 49px; padding: 0 10px 0 9px; }
.head h2 { font-size: 18px; font-weight: 600; }
.viz h3 { padding-left: 14px; }
.viz .head + h3 { padding-left: 9px; line-height: 18px; }
.modes { display: flex; justify-content: space-between; padding: 5px 10px 5px 9px; }
.modes button { display: grid; place-items: center; width: 40px; height: 40px; }
.modes .on { background: #d2d0ce; }
.gallery { display: grid; grid-template-columns: repeat(6, 35px); grid-auto-rows: 35px; padding: 7px 8px 5px 7px; }
.gallery button { display: grid; place-items: center; width: 29px; height: 29px; margin: 3px; border: 1px solid transparent; }
.gallery .on { border-color: #666; background: #e1dfdd; }
.gallery svg { width: 23px; height: 23px; overflow: visible; }
.k { fill: none; stroke: #333; stroke-width: 1.800; }
.k1 { fill: none; stroke: #333; stroke-width: 1.400; }
.bl { fill: none; stroke: #2a7ab5; stroke-width: 1.400; }
.b { fill: #7fc0f0; stroke: #2a7ab5; stroke-width: 1.400; }
.g { fill: #c8c6c4; stroke: #777; stroke-width: 1.200; }
.w { fill: #fff; stroke: #444; stroke-width: 1.400; }
.num { fill: #2a7ab5; }
.letter { fill: #2f7fb0; font-weight: 700; }
.glyph { font-weight: 700; }
.wells { border-top: 1px solid #dddbd9; padding: 11px 4px 0; }
.wells h3 { padding-left: 13px; padding-left: 10px; }
.drop { margin: 6px 0 14px; padding: 4px 3px; height: 36px; border: 1px dashed #c0bebc; background: #fff; }
.chip { display: flex; align-items: center; justify-content: space-between; width: 100%; height: 27px; padding: 0 29px 0 5px; background: #edebe9; border: 1px solid #c0bebc; white-space: nowrap; }
.wells .bold { font-weight: 600; margin-bottom: 5px; color: #555; }
.toggle { display: flex; align-items: center; justify-content: space-between; height: 32px; padding: 0 7px 0 10px; white-space: nowrap; }
.toggle input { appearance: none; width: 37px; height: 20px; margin: 0; border: 1px solid #555; border-radius: 10px; background: radial-gradient(circle at 11px 9px, #555 5px, #fff 6px); }
.toggle input:checked { background: radial-gradient(circle at 25px 9px, #fff 4px, #555 5px); }
.add-field { height: 32px; padding: 5px 10px; margin-top: 8px; overflow: hidden; white-space: nowrap; }

.menu { position: absolute; z-index: 3; left: 193px; top: 433px; width: 225px; padding: 2px 0 1px; background: #fff; box-shadow: 0 2px 5px #0004; color: #444; }
.menu::after { content: ""; position: absolute; inset: -7px -7px -11px; border: 5px solid #dc1f26; pointer-events: none; }
.menu button { display: flex; align-items: center; position: relative; width: 100%; height: 30px; padding-left: 34px; white-space: nowrap; }
.menu button svg { position: absolute; left: 11px; }
.menu button .sub { left: auto; right: 15px; }
.menu hr { height: 1px; margin: 0; border: 0; background: #e1dfdd; }

.fields { width: 225px; }
.fields .head { padding-left: 10px; }
.search { display: flex; align-items: center; gap: 7px; height: 33px; margin: 8px 5px 12px; padding-left: 10px; border: 1px solid #666; border-radius: 2px; background: #fff; }
.search input { flex: 1; min-width: 0; border: 0; padding: 0; background: none; font: inherit; font-size: 16px; }
.search input::placeholder { color: #605e5c; opacity: 1; }
.tree > * { display: flex; align-items: center; height: 30px; white-space: nowrap; }
.tbl { width: 100%; padding-left: 9px; }
.tbl svg + svg { margin-left: 4px; }
.tree label { padding-left: 48px; }
.tree .exp { padding-left: 30px; }
.tree input { appearance: none; width: 15px; height: 15px; margin: 0; border: 1px solid #666; border-radius: 2px; }
.tree input:checked { border-color: #117865; background: #117865; display: grid; place-items: center; }
.tree input:checked::after { content: ""; width: 9px; height: 5px; border: solid #fff; border-width: 0 0 2px 2px; rotate: -45deg; translate: 0 -1px; }
.tree span { width: 32px; padding-left: 7px; }
.ch { fill: none; stroke: #555; stroke-width: 1.200; }
.ti { fill: none; stroke: #444; stroke-width: 1.300; }

.status { display: flex; align-items: center; justify-content: space-between; height: 30px; padding: 0 28px 0 6px; border-top: 1px solid #dddbd9; color: #555; }
.zoom { display: flex; align-items: center; }
.zoom button { width: 12px; font-size: 18px; font-weight: 600; }
.zoom button:last-child { width: 21px; }
.zoom output { width: 31px; margin: 0 22px 0 20px; }
.zoom input { appearance: none; width: 125px; height: 14px; margin: 0 6px 0 2px; background: linear-gradient(#555, #555) no-repeat 63px 3px / 2px 8px, linear-gradient(#555, #555) no-repeat 0 7px / 100% 1px; }
.zoom input::-webkit-slider-thumb { appearance: none; width: 5px; height: 14px; background: #555; }
```
